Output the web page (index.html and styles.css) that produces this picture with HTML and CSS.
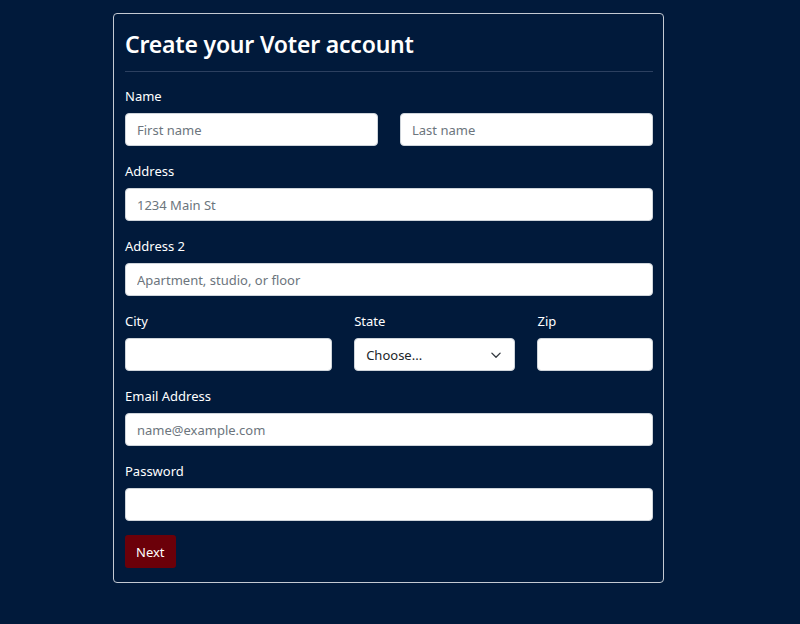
FILE: index.html
```html
<!DOCTYPE html>
<html lang="en">
<head>
<meta charset="utf-8">
<title>Create your Voter account</title>
<link rel="stylesheet" href="styles.css">
</head>
<body>
<div class="page">
  <form class="card">
    <h1 class="title">Create your Voter account</h1>
    <hr class="divider">
    <div class="group">
      <label class="label">Name</label>
      <div class="row">
        <input class="input col-6" type="text" placeholder="First name">
        <input class="input col-6" type="text" placeholder="Last name">
      </div>
    </div>
    <div class="group">
      <label class="label">Address</label>
      <input class="input" type="text" placeholder="1234 Main St">
    </div>
    <div class="group">
      <label class="label">Address 2</label>
      <input class="input" type="text" placeholder="Apartment, studio, or floor">
    </div>
    <div class="group row">
      <div class="col col-5">
        <label class="label">City</label>
        <input class="input" type="text">
      </div>
      <div class="col col-4">
        <label class="label">State</label>
        <div class="select">
          <span>Choose...</span>
          <svg class="chev" width="12" height="12" viewBox="0 0 16 16"><path d="M2.5 5.5l5.5 5.5 5.5-5.5" fill="none" stroke="#343a40" stroke-width="1.8" stroke-linecap="round" stroke-linejoin="round"/></svg>
        </div>
      </div>
      <div class="col col-3">
        <label class="label">Zip</label>
        <input class="input" type="text">
      </div>
    </div>
    <div class="group">
      <label class="label">Email Address</label>
      <input class="input" type="email" placeholder="name@example.com">
    </div>
    <div class="group last">
      <label class="label">Password</label>
      <input class="input" type="password">
    </div>
    <button class="btn" type="button">Next</button>
  </form>
</div>
</body>
</html>
```

FILE: styles.css
```css
html, body {
  margin: 0;
  padding: 0;
  background: #011a3b;
}
body {
  font-family: "Noto Sans", "Open Sans", sans-serif;
  color: #ffffff;
}
.page {
  padding: 13px 0 0 113px;
}
.card {
  box-sizing: border-box;
  width: 551px;
  border: 1px solid #c3c9d2;
  border-radius: 4px;
  padding: 16px 10px 14px 11px;
  display: flex;
  flex-direction: column;
}
.title {
  margin: 0;
  font-size: 23px;
  font-weight: 600;
  line-height: 29px;
  letter-spacing: -0.2px;
}
.divider {
  border: 0;
  border-top: 1px solid #2c4060;
  margin: 12px 0 14px 0;
  height: 0;
}
.group {
  margin-bottom: 15px;
  display: flex;
  flex-direction: column;
}
.group.last {
  margin-bottom: 14px;
}
.row {
  display: flex;
  flex-direction: row;
  gap: 22px;
}
.group.row {
  align-items: flex-start;
}
.col {
  display: flex;
  flex-direction: column;
  flex: 0 0 auto;
}
.col-6 { flex: 1 1 0; }
.col-5 { width: calc((100% + 22px) * 5 / 12 - 22px); }
.col-4 { width: calc((100% + 22px) * 4 / 12 - 22px); }
.col-3 { width: calc((100% + 22px) * 3 / 12 - 22px); }
.label {
  font-size: 13px;
  line-height: 21px;
  margin-bottom: 6px;
  display: block;
}
.input, .select {
  box-sizing: border-box;
  height: 33px;
  width: 100%;
  border: 1px solid #ced4da;
  border-radius: 4px;
  background: #ffffff;
  padding: 0 11px;
  font-family: inherit;
  font-size: 13px;
  color: #212529;
  outline: none;
}
.row > .input {
  width: auto;
  min-width: 0;
}
.input::placeholder {
  color: #6c757d;
}
.select {
  display: flex;
  align-items: center;
  justify-content: space-between;
  color: #212529;
}
.chev {
  margin-right: 1px;
}
.btn {
  align-self: flex-start;
  box-sizing: border-box;
  height: 33px;
  padding: 0 11px;
  border: 0;
  border-radius: 3px;
  background: #6b0009;
  color: #ffffff;
  font-family: inherit;
  font-size: 13px;
}
```
